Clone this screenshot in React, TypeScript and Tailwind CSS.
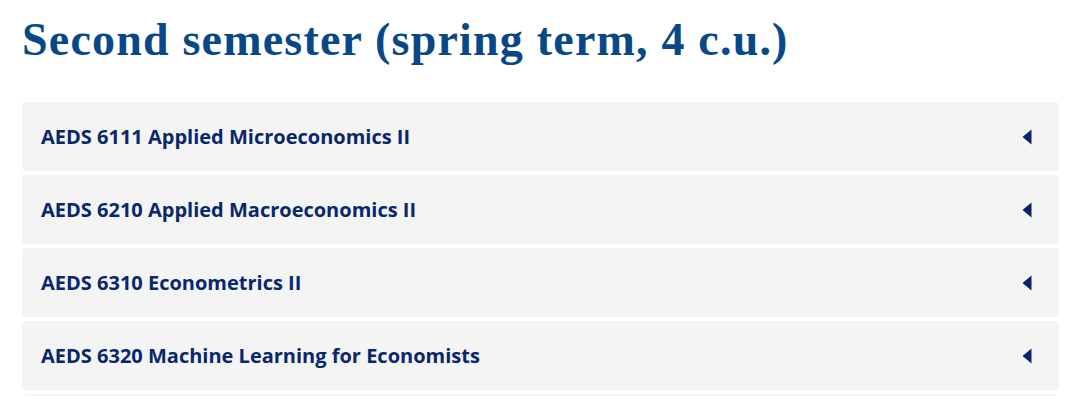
import React from "react";

const items = [
  "AEDS 6111 Applied Microeconomics II",
  "AEDS 6210 Applied Macroeconomics II",
  "AEDS 6310 Econometrics II",
  "AEDS 6320 Machine Learning for Economists",
];

function Caret() {
  return (
    <svg width="10" height="16" viewBox="0 0 10 16" className="shrink-0">
      <path d="M9.5 0.5 L0.5 8 L9.5 15.5 Z" fill="#06246b" />
    </svg>
  );
}

export default function App() {
  return (
    <div className="bg-white w-[1080px] h-[415px] overflow-hidden">
      <div className="pl-[22px] pr-[21px]">
        <h1
          className="text-[#084887] font-bold text-[46px] leading-none tracking-[1.2px] pt-[17px] pb-[39px]"
          style={{ fontFamily: '"Liberation Serif", serif' }}
        >
          Second semester (spring term, 4 c.u.)
        </h1>
        <div className="flex flex-col gap-[4px]">
          {items.map((t, i) => (
            <div
              key={i}
              className="bg-[#f4f4f4] rounded-[4px] h-[69px] flex items-center justify-between pl-[19px] pr-[27px]"
            >
              <span
                className="text-[#08276c] font-bold text-[20px]"
                style={{ fontFamily: '"Open Sans", sans-serif' }}
              >
                {t}
              </span>
              <Caret />
            </div>
          ))}
          <div className="h-[2px] mx-[2px] bg-[#f5f5f5] rounded-t-[2px]" />
        </div>
      </div>
    </div>
  );
}
